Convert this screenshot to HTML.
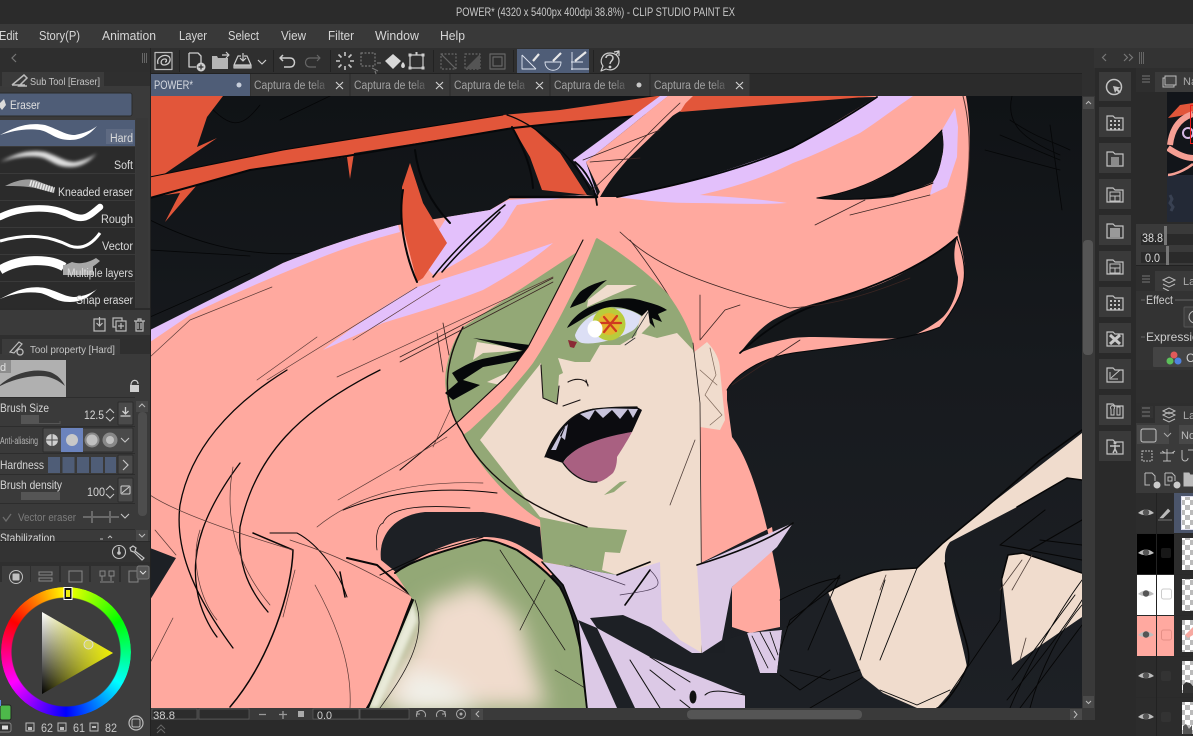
<!DOCTYPE html>
<html><head><meta charset="utf-8"><title>CLIP STUDIO PAINT</title>
<style>
html,body{margin:0;padding:0;background:#2b2b2b;width:1193px;height:736px;overflow:hidden}
svg{position:absolute;left:0;top:0;display:block;font-size:12px}
text{font-family:"Liberation Sans",sans-serif}
#ring{position:absolute;left:1px;top:587px;width:130px;height:130px;border-radius:50%;background:conic-gradient(#ff0,#0f0 60deg,#0ff 120deg,#00f 180deg,#f0f 240deg,#f00 300deg,#ff0);-webkit-mask:radial-gradient(circle,transparent 54px,#000 55px);mask:radial-gradient(circle,transparent 54px,#000 55px)}
#tri{position:absolute;left:42px;top:612px;width:71px;height:82px;clip-path:polygon(0 0,100% 50%,0 100%);background:linear-gradient(to left,#efef00,rgba(239,239,0,0)),linear-gradient(to bottom,#fff,#000)}
</style></head><body>
<svg width="1193" height="736" viewBox="0 0 1193 736" xmlns="http://www.w3.org/2000/svg">
<defs>
<clipPath id="cv"><rect x="151" y="96" width="931" height="612"/></clipPath>
<clipPath id="sh"><path d="M395 573L427 557L483 540L517 550L560 587L580 647L587 708L368 708L413 600Z"/></clipPath>
<clipPath id="ln"><rect x="0" y="120" width="135" height="190"/></clipPath>
<clipPath id="rp"><rect x="1136" y="40" width="57" height="696"/></clipPath>
<clipPath id="nv"><rect x="1167" y="92" width="26" height="130"/></clipPath>
<linearGradient id="bg" x1="0" y1="0" x2="0" y2="1"><stop offset="0" stop-color="#101316"/><stop offset="0.45" stop-color="#171a1e"/><stop offset="1" stop-color="#1d2025"/></linearGradient>
<linearGradient id="fade"><stop offset="0" stop-color="#3a3a3a" stop-opacity="0"/><stop offset="1" stop-color="#3a3a3a" stop-opacity=".75"/></linearGradient>
<filter id="b1" x="-30%" y="-30%" width="160%" height="160%"><feGaussianBlur stdDeviation="11"/></filter>
<filter id="b2" x="-30%" y="-30%" width="160%" height="160%"><feGaussianBlur stdDeviation="2"/></filter>
<filter id="b3" x="-30%" y="-30%" width="160%" height="160%"><feGaussianBlur stdDeviation="1.5"/></filter>
<pattern id="ck" width="10" height="10" patternUnits="userSpaceOnUse"><rect width="10" height="10" fill="#fff"/><rect width="5" height="5" fill="#bbb"/><rect x="5" y="5" width="5" height="5" fill="#bbb"/></pattern>
<g id="fd" fill="none" stroke="#c2c2c2" stroke-width="1.2"><path d="M-8 -7h6l2 2h8v12h-16z"/></g>
<g id="eye"><path d="M-8 0Q0 -7 8 0Q0 4.500 -8 0Z" fill="#bdbdbd"/><circle cx="0" cy="-0.500" r="3.200" fill="#555"/></g>
</defs>

<!-- chrome base -->
<rect width="1193" height="24" fill="#2b2b2b"/>
<rect y="24" width="1193" height="24" fill="#393939"/>
<rect y="48" width="1193" height="26" fill="#2f2f2f"/>
<rect y="74" width="1193" height="22" fill="#2b2b2b"/>
<rect x="150" y="73" width="943" height="1" fill="#222"/>
<text x="456" y="16" font-size="12" textLength="279" lengthAdjust="spacingAndGlyphs" fill="#c8c8c8">POWER* (4320 x 5400px 400dpi 38.8%) - CLIP STUDIO PAINT EX</text>
<g font-size="12.5" fill="#d6d6d6">
<text x="-1" y="40" textLength="19" lengthAdjust="spacingAndGlyphs">Edit</text>
<text x="39" y="40" textLength="41" lengthAdjust="spacingAndGlyphs">Story(P)</text>
<text x="102" y="40" textLength="54" lengthAdjust="spacingAndGlyphs">Animation</text>
<text x="179" y="40" textLength="28" lengthAdjust="spacingAndGlyphs">Layer</text>
<text x="228" y="40" textLength="31" lengthAdjust="spacingAndGlyphs">Select</text>
<text x="281" y="40" textLength="25" lengthAdjust="spacingAndGlyphs">View</text>
<text x="328" y="40" textLength="26" lengthAdjust="spacingAndGlyphs">Filter</text>
<text x="375" y="40" textLength="44" lengthAdjust="spacingAndGlyphs">Window</text>
<text x="440" y="40" textLength="25" lengthAdjust="spacingAndGlyphs">Help</text>
</g>

<!-- artwork -->
<rect x="151" y="96" width="931" height="612" fill="url(#bg)"/>
<g clip-path="url(#cv)" stroke-linejoin="round" stroke-linecap="round">
<!-- faint dark sketches -->
<g fill="none" stroke="#050607" stroke-width="0.8">
<path d="M150 220C190 240 240 258 310 253"/><path d="M150 250L250 256"/><path d="M150 317L250 273"/>
<path d="M1010 120C1040 140 1050 140 1070 150M1000 135L1060 160M985 150L1060 170M1012 96C1005 125 1025 140 1060 155M1050 125L1062 210"/>
<path d="M200 96C230 130 240 130 260 105M280 120L330 96"/>
<path d="M780 325C830 315 890 300 950 265"/>
</g>
<!-- hat -->
<g fill="#e2563a">
<path d="M150 96L223 96L207 117L197 147L217 138L160 177L150 180Z"/>
<path d="M150 177L283 150L503 115L560 110L657 96L877 96L680 112L560 123L513 128L354 153L350 179L347 157L250 170L197 185L165 222L180 193L150 197Z"/>
<path d="M507 115L533 128L560 153L587 195L542 190L530 157L513 128Z"/>
</g>
<g fill="none" stroke="#06080a" stroke-width="2"><path d="M150 198L197 185L250 170L347 156L513 128L560 123L680 112L877 96"/><path d="M512 127C525 150 532 170 533 188"/></g>
<path d="M150 177L283 150L503 115" fill="none" stroke="#06080a" stroke-width="1"/>
<path d="M507 115C530 122 570 150 590 190" fill="none" stroke="#06080a" stroke-width="1.200"/>
<!-- left hair -->
<path d="M150 333L283 263Q340 240 398 225L447 217L490 210L510 198L587 195L600 197L600 540L368 708L150 708Z" fill="#ffa99f"/>
<path d="M150 330L283 263Q340 240 398 225L400 232Q350 245 310 262Q240 290 190 315L150 342Z" fill="#e3c0fb"/>
<path d="M447 217L490 210L508 200L583 195L517 205C510 215 507 222 503 227C495 235 490 242 483 247C465 258 450 268 433 275L420 260Z" fill="#e3c0fb"/>
<path d="M323 350C355 325 385 305 417 287C465 272 510 258 553 243C530 262 510 275 483 290C450 303 415 313 383 323Z" fill="#e3c0fb"/>
<path d="M433 277C450 255 480 225 505 205M442 272C460 250 485 228 500 212" fill="none" stroke="#0a0a0a" stroke-width="1.500"/>
<!-- horn on top of hair -->
<path d="M410 163L402 187L402 223L417 282L423 278L447 243L423 203Z" fill="#e2563a"/>
<path d="M403 190C398 220 405 255 417 282" fill="none" stroke="#06080a" stroke-width="2"/>
<path d="M415 150C418 175 428 200 450 223" fill="none" stroke="#06080a" stroke-width="2"/>
<path d="M150 548L176 558L150 600Z" fill="#1d2025"/>
<!-- right hair -->
<path d="M597 197C630 140 640 120 693 96L966 96C972 130 972 170 958 233C968 270 970 290 940 327C910 340 850 345 793 353C760 358 735 375 727 390L727 400L732 437C750 460 765 510 780 590L780 627L750 633L732 627L732 587L775 547L772 527L697 565L700 430L693 343L597 238Z" fill="#ffa99f"/>
<path d="M600 197C610 180 618 170 627 160C645 140 660 123 677 113L700 100L877 97C870 102 865 104 860 107C835 122 815 135 793 147C765 160 740 170 710 177C680 185 650 190 617 197Z" fill="#111417"/>
<path d="M690 96L877 96L680 112Z" fill="#e2563a"/>
<path d="M617 197C660 190 690 183 710 175C745 165 770 155 793 147C820 133 845 117 877 96L913 96C895 108 880 120 860 133C835 145 815 155 793 163C765 177 735 187 700 195C730 197 760 199 787 203C755 205 725 203 693 203C665 203 640 200 617 197Z" fill="#e3c0fb"/>
<path d="M573 160L660 96L668 96L586 162L597 195Z" fill="#e3c0fb"/>
<path d="M668 96L693 96L627 160L600 192L586 162Z" fill="#ffa99f"/>
<path d="M817 198C840 195 860 188 877 180C900 168 925 150 942 130C944 140 944 150 942 157C940 168 937 176 933 182C915 190 905 193 893 197C870 200 845 201 817 198Z" fill="#111417"/>
<path d="M955 108L958 127L957 157L947 187L930 195L933 182C937 176 940 168 942 157C944 150 944 140 942 130Z" fill="#e3c0fb"/>
<path d="M957 238C952 255 955 265 958 277C958 295 950 310 943 317C930 328 915 335 907 338C860 340 820 335 793 338C770 342 750 348 740 353C750 340 760 328 773 320C795 308 815 303 840 297C860 292 880 285 893 278C915 268 940 250 957 238Z" fill="#14171a"/>
<g fill="none" stroke="#06080a"><path d="M617 197C680 185 740 170 793 147C825 130 850 115 877 97" stroke-width="1.800"/><path d="M510 197L597 197" stroke-width="2.500"/><path d="M957 237C930 262 880 285 840 297C800 308 770 325 740 353" stroke-width="1.800"/><path d="M575 162C585 170 595 185 597 205" stroke-width="1.800"/><path d="M817 198C870 190 910 165 942 130" stroke-width="1"/><path d="M817 198C850 202 900 197 933 183" stroke-width="1"/><path d="M963 96C972 130 972 175 958 233" stroke-width="1" stroke="#55322e"/><path d="M957 238C968 270 970 290 940 327C910 340 850 345 793 353C760 358 735 375 727 390" stroke-width="1"/></g>
<g fill="none" stroke="#3a2522" stroke-width="0.8"><path d="M592 190C620 165 640 140 680 103"/><path d="M583 160L660 130M590 162L640 158"/><path d="M815 225L865 200M850 215L930 195"/><path d="M620 232C655 265 690 280 790 308C840 305 880 290 910 278"/><path d="M630 240C660 280 680 310 692 345"/><path d="M700 295L700 340M700 340L725 310L740 305"/><path d="M732 385L800 340"/></g>
<!-- face -->
<path d="M597 238C625 255 650 275 667 293C680 310 690 330 693 343L700 403L702 653L660 640L658 562L617 575L543 562L540 520C515 505 480 470 460 430C448 410 442 385 447 365C450 350 455 338 463 327L580 250Z" fill="#93a876"/>
<path d="M677 333L693 350L700 403L702 653L660 640L660 565L617 575L602 570L605 552L620 553L627 530L587 527L540 517L480 440L533 373L541 363L543 398L557 403L559 375L563 373L558 358L575 362L590 362L600 345L620 345L640 333L657 338Z" fill="#f0dccd"/>
<path d="M693 353L707 342C715 350 720 360 720 370L725 420L720 430L700 427Z" fill="#f0dccd"/>
<path d="M477 342L527 350L483 353L473 360ZM487 382L513 370L500 385ZM588 300L607 285L637 285L613 295L587 307Z" fill="#f0dccd"/>
<!-- eye -->
<path d="M567 328C572 318 582 310 592 306C605 300 625 296 640 300C650 303 660 305 667 310L658 314L662 322L652 318L655 328L645 318C635 310 620 306 610 307C595 309 582 320 567 328Z" fill="#06080a"/>
<path d="M607 280C595 283 586 287 580 292C576 297 572 303 570 308L585 302C590 295 598 287 607 280Z" fill="#06080a"/>
<path d="M575 335C580 322 592 312 612 309C625 307 635 312 641 316C640 324 635 330 630 332C615 340 595 345 582 343C578 342 575 338 575 335Z" fill="#dcdff5"/>
<circle cx="609" cy="324" r="16.500" fill="#b9cc3c"/><circle cx="609" cy="324" r="11" fill="#e4b52c"/>
<path d="M604 317L616 331M617 316L604 332M599 323H621" stroke="#cf3a20" stroke-width="2.200"/>
<ellipse cx="595" cy="329" rx="7.500" ry="8.500" fill="#fff"/>
<path d="M568 340L577 342L574 348L570 347Z" fill="#8a2a35"/>
<path d="M640 318L648 310L650 325L635 340" fill="#f0dccd"/>
<path d="M635 338L625 345M648 312L632 338" fill="none" stroke="#333" stroke-width=".8"/>
<!-- wink -->
<path d="M473 338L530 345L527 352Z" fill="#06080a"/>
<path d="M452 373C465 365 475 360 487 358L527 350L520 360L483 367L463 380L480 385L453 400L445 393L458 382Z" fill="#06080a"/>
<!-- nose+mouth -->
<g fill="none" stroke="#1a1414" stroke-width="1.100"><path d="M568 382C575 378 585 378 588 385M586 380L588 386"/><path d="M563 406L580 400"/><path d="M541 365L543 398L557 404L559 386"/></g>
<path d="M545 457C550 440 560 428 570 420C578 412 590 408 600 408L637 407L642 410L632 432C610 437 595 440 583 447C572 452 565 458 563 463Z" fill="#0c0c10"/>
<path d="M563 463C570 452 580 447 590 443C605 437 620 434 632 432C625 445 620 452 617 457C617 465 615 470 613 473C605 480 600 482 597 482C585 482 570 475 563 463Z" fill="#a96081"/>
<path d="M580 414L589 420L595 410L603 418L612 410L620 419L628 409L633 418L638 409L600 408ZM551 450L556 450L566 425L561 432ZM560 436L564 428L568 424L565 440Z" fill="#c8c4dc"/>
<path d="M545 457C552 438 565 420 580 413C590 408 615 407 637 407M563 463C575 480 590 483 597 482" fill="none" stroke="#111" stroke-width="1.200"/>
<path d="M604 495L620 482L627 481L614 492Z" fill="#93a876"/>
<!-- strand -->
<path d="M583 238L597 236C580 280 555 330 533 363C520 380 510 390 500 402L470 430L400 480L400 470L460 420L505 378L528 347C545 315 565 275 583 238Z" fill="#ffa99f"/>
<path d="M583 240C565 275 545 315 528 347L505 378L460 420L400 470" fill="none" stroke="#140d0c" stroke-width="1.100"/>
<path d="M463 327C445 360 440 400 462 432C480 470 520 505 587 527" fill="none" stroke="#140d0c" stroke-width="1.400"/>
<path d="M693 343L700 403L702 653" fill="none" stroke="#2a2220" stroke-width="0.800"/>
<path d="M710 348L716 375L705 395L722 415L710 425M700 370L717 385" fill="none" stroke="#806a5c" stroke-width="0.700"/>
<path d="M400 357L553 278M400 362L553 282M437 333L443 372M443 323L449 355" fill="none" stroke="#3a2522" stroke-width="0.800"/>
<!-- hair lines -->
<g fill="none" stroke="#0a0707" stroke-width="1.300">
<path d="M287 370C230 405 190 450 180 505C175 545 190 590 233 648"/>
<path d="M240 463C205 510 190 550 197 590C200 610 210 628 217 637"/>
<path d="M380 370C300 410 255 455 240 527C238 560 245 585 268 612"/>
<path d="M253 533L293 550C292 590 270 660 230 707" stroke-width="1.500"/>
<path d="M347 558L377 565L413 597C395 640 385 680 367 708" stroke-width="2"/>
<path d="M270 533L297 533C320 545 340 575 347 597" stroke-width="1"/>
<path d="M343 510C380 495 430 485 497 493" stroke-width="1"/>
<path d="M383 523C390 505 430 505 470 508" stroke-width="0.800"/>
<path d="M377 550C375 535 378 525 383 523" stroke-width="0.700"/>
<path d="M340 572L345 597" stroke-width="1.500"/>
</g>
<g fill="none" stroke="#5a3a36" stroke-width="0.700">
<path d="M150 357L190 320L272 287M257 380L317 337M267 380L417 287M337 377L553 277M353 340L440 285M338 500L447 437M317 527C350 500 400 480 483 483M450 410L433 447"/>
<path d="M233 467C225 510 232 560 270 605M173 618L150 663M315 585C340 630 352 670 350 708M200 530C190 560 200 600 217 620M150 495C165 505 200 522 293 550M155 530L176 555M283 617L295 570"/>
<path d="M290 540C320 550 350 560 413 597"/>
</g>
<!-- neck dark / shoulder -->
<path d="M381 560C378 535 395 515 425 512L483 512C510 515 530 525 540 527L543 560C520 545 510 537 483 537C450 540 420 555 397 573Z" fill="#1d2025"/>
<path d="M395 573C405 565 415 562 427 557C445 550 465 545 483 540C495 540 505 545 517 550C535 562 550 575 560 587C570 605 575 625 580 647L587 708L368 708L413 600Z" fill="#93a876"/>
<g clip-path="url(#sh)"><path d="M427 603L477 583L517 617L547 707L368 708L413 640Z" fill="#f0dccd" filter="url(#b1)"/><path d="M395 708L410 670L450 680L480 708Z" fill="#f1f1ea" filter="url(#b1)"/><path d="M368 708L413 600L418 620L378 708Z" fill="#e9ead9" filter="url(#b2)"/></g>
<path d="M395 573C405 565 415 562 427 557C445 550 465 545 483 540C495 540 505 545 517 550C535 562 550 575 560 587C570 605 575 625 580 647L587 708M413 600L368 708" fill="none" stroke="#0a0a0a" stroke-width="2"/>
<path d="M380 575L430 552L483 537" fill="none" stroke="#0a0a0a" stroke-width="1"/>
<path d="M415 600C430 640 400 680 380 708M500 550L565 650M545 580L520 630M555 670L585 688" fill="none" stroke="#1a1414" stroke-width="0.700"/>
<!-- collar -->
<path d="M542 562L617 575L660 562L662 620L680 640L702 653L725 653L760 673L777 673L772 708L587 708L578 623L563 585Z" fill="#dcc9e6"/>
<path d="M697 565L793 523L777 547L732 587L722 640L702 653Z" fill="#dcc9e6"/>
<path d="M747 633L782 630L777 673L760 673Z" fill="#dcc9e6"/>
<path d="M578 620L597 628L635 708L617 708Z" fill="#1d2025"/>
<path d="M590 618L623 615L650 627L692 653L725 653L725 640L747 633L760 673L777 673L782 630L787 627L828 592L863 677L903 708L745 708L745 695L713 682L650 657L597 628Z" fill="#1d2025"/>
<path d="M697 565C730 555 770 540 793 523M542 562L563 585L578 623L587 708M617 575L650 562M650 570L625 605" fill="none" stroke="#0a0a0a" stroke-width="1.600"/>
<path d="M752 636L768 668M760 632L775 660M770 632L778 655" fill="none" stroke="#0a0a0a" stroke-width="0.800"/>
<ellipse cx="693" cy="697" rx="3.500" ry="6.500" fill="#111"/>
<path d="M650 657L690 682M650 670L675 690M630 660L660 708M680 700L690 708" fill="none" stroke="#111" stroke-width="1"/>
<path d="M705 695C712 688 728 692 745 695" fill="none" stroke="#111" stroke-width="1"/>
<path d="M620 595C650 590 670 590 650 570M570 565L625 585" fill="none" stroke="#4a3a55" stroke-width="0.700"/>
<!-- right skin -->
<path d="M1082 433L1082 480L1067 478L1017 507L950 542C944 550 945 556 945 563C952 610 962 640 967 667C962 680 950 693 937 708L917 708L883 693L863 677L828 592C845 582 865 574 883 570L917 568L943 543L983 510Z" fill="#f0dccd"/>
<path d="M1082 573L1023 553L1008 555L1002 578L1012 665L1082 617Z" fill="#f0dccd"/>
<path d="M1082 430L1040 460L983 510L943 543L917 568L883 570C865 574 845 582 828 592M1082 573L1023 553L1008 555L1002 578M945 563C955 620 975 650 967 667C955 695 940 708 937 708M1017 507L1067 478L1082 480" fill="none" stroke="#060606" stroke-width="1.500"/>
<g fill="none" stroke="#060606" stroke-width=".9">
<path d="M828 592L790 620L780 650M787 627L840 575L808 650M780 600C800 590 820 580 840 578M780 675L800 690L830 670M863 677L810 708M880 690L917 705L950 690M1082 580C1060 610 1030 660 1010 708M1082 605C1060 630 1040 670 1030 708M1082 625L1020 708M1075 595L1012 680"/>
<path d="M950 693L1000 620L1002 578M1007 700C1040 660 1070 620 1082 600M885 580L860 660M917 568L880 660M790 670L830 680L860 670"/>
<path d="M1045 510L1000 545L1082 560M1030 550L1082 520M1040 540L1082 545" stroke-width="1.100"/>
</g>
<path d="M886 575L880 590M1022 560L1000 590M1032 555L1012 590M1026 638L1020 660M695 440L670 505" fill="none" stroke="#51403a" stroke-width="0.800"/>
</g>

<!-- tabs -->
<rect x="151" y="74" width="99" height="22" fill="#4f5d77"/>
<g fill="#3a3a3a"><rect x="250.500" y="74" width="99" height="22"/><rect x="350.500" y="74" width="99" height="22"/><rect x="450.500" y="74" width="99" height="22"/><rect x="550.500" y="74" width="99" height="22"/><rect x="650.500" y="74" width="99" height="22"/></g>
<text x="154" y="89" fill="#d5d9e0" font-size="11.500" textLength="39" lengthAdjust="spacingAndGlyphs">POWER*</text>
<circle cx="239" cy="85" r="2.500" fill="#c8cfdb"/>
<g fill="#a2a2a2" font-size="11.500">
<text x="254" y="89" textLength="71" lengthAdjust="spacingAndGlyphs">Captura de tela</text>
<text x="354" y="89" textLength="71" lengthAdjust="spacingAndGlyphs">Captura de tela</text>
<text x="454" y="89" textLength="71" lengthAdjust="spacingAndGlyphs">Captura de tela</text>
<text x="554" y="89" textLength="71" lengthAdjust="spacingAndGlyphs">Captura de tela</text>
<text x="654" y="89" textLength="71" lengthAdjust="spacingAndGlyphs">Captura de tela</text>
</g>
<g fill="url(#fade)"><rect x="310" y="76" width="16" height="18"/><rect x="410" y="76" width="16" height="18"/><rect x="510" y="76" width="16" height="18"/><rect x="610" y="76" width="16" height="18"/><rect x="710" y="76" width="16" height="18"/></g>
<g stroke="#cfcfcf" stroke-width="1.200"><path d="M336 82l7 7M343 82l-7 7M436 82l7 7M443 82l-7 7M536 82l7 7M543 82l-7 7M736 82l7 7M743 82l-7 7"/></g>
<circle cx="639" cy="85" r="2.500" fill="#c8c8c8"/>
<path d="M1084 81l3.500 3.500 3.500 -3.500" fill="none" stroke="#cfcfcf" stroke-width="1.200"/>

<!-- toolbar -->
<rect x="517" y="49" width="72" height="24" fill="#4f5d77"/>
<g stroke="#222" stroke-width="1"><path d="M179.500 50V72M273.500 50V72M330.500 50V72M433.500 50V72M513.500 50V72M593.500 50V72"/></g>
<g fill="none" stroke="#cdcdcd" stroke-width="1.200" stroke-linejoin="round">
<rect x="155" y="52.500" width="17" height="17" stroke="#bbb"/><path d="M158 64C156 58 163 54 168 56C172 58 170 65 164 65C160 65 160 59 165 59C167 59 167 62 165 62" stroke-width="1.300"/>
<path d="M189 53h9l3 3v7M189 53v14h7" stroke-width="1.300"/><circle cx="201" cy="67" r="4.500" fill="#cfcfcf" stroke="none"/><path d="M198.500 67h5M201 64.500v5" stroke="#2f2f2f"/>
<path d="M212 56h5l1 2h10v11h-16z" fill="#b5b5b5" stroke="none"/><path d="M222 55h7M226 52l3 3-3 3"/>
<path d="M234 65L238 56h3M251 65L247 56h-3M234 65h17v3h-17z"/><path d="M243 53v8M240 58l3 3 3-3"/><rect x="234" y="65.500" width="17" height="3" fill="#b5b5b5" stroke="none"/>
<path d="M258 60l4 4 4-4"/>
<path d="M283 55l-3 3 3 3M280 58h10c6 0 6 9 0 9h-6" stroke-width="1.500"/>
<g opacity=".35"><path d="M317 55l3 3-3 3M320 58h-10c-6 0-6 9 0 9h6"/></g>
<g stroke-width="1.600" opacity=".95"><path d="M345 52v4M345 66v4M336 61h4M350 61h4M338.500 54.500l3 3M348.500 64.500l3 3M351.500 54.500l-3 3M341.500 64.500l-3 3"/></g>
<g opacity=".45"><rect x="361" y="53" width="14" height="13" stroke-dasharray="2 1.500"/><path d="M372 68l6 3M377 63h4M375 71l1 3"/></g>
<path d="M393 54l8 7-8 8-8-8z" fill="#d8d8d8" stroke="none"/><path d="M403 62c3 3 2 6 0 6s-3-3 0-6z" fill="#d8d8d8" stroke="none"/>
<rect x="410" y="55" width="13" height="13"/><g fill="#cdcdcd" stroke="none"><rect x="408.500" y="53.500" width="3" height="3"/><rect x="421.500" y="53.500" width="3" height="3"/><rect x="408.500" y="66.500" width="3" height="3"/><rect x="421.500" y="66.500" width="3" height="3"/><rect x="415.500" y="52" width="2" height="3"/></g>
<g opacity=".35"><rect x="441" y="54" width="15" height="15" stroke-dasharray="2 1.500"/><path d="M441 54l15 15"/><rect x="465" y="54" width="15" height="15" stroke-dasharray="2 1.500"/><path d="M480 54v15h-15z" fill="#999" stroke="none"/><rect x="490" y="54" width="15" height="15"/><rect x="493" y="57" width="9" height="9"/></g>
<g stroke="#dfe5f0"><path d="M522 55v14h14M522 55l14 14" stroke-width="0.900"/><path d="M533 61l6-7" stroke-width="2.200" stroke="#e8e8e8"/>
<path d="M545 62h16c0 11-16 11-16 0z" stroke-width="0.900"/><path d="M553 61l8-8" stroke-width="2.200" stroke="#e8e8e8"/>
<path d="M572 52v18M571 69h18M571 62h12" stroke-width="0.900"/><path d="M575 61l11-9" stroke-width="2.200" stroke="#e8e8e8"/></g>
<path d="M603 66l-2 5 5-2c8 3 13-3 13-8 0-5-4-8-9-8-8 0-11 8-7 13z"/><path d="M606 58c0-4 7-4 7 0 0 3-3 3-3 6" stroke-width="1.500"/><circle cx="610" cy="67" r="0.800" fill="#cdcdcd"/><path d="M614 52l5-1 0 5M619 51l-3 4"/>
</g>

<!-- left column -->
<rect x="0" y="48" width="150" height="688" fill="#3a3a3a"/>
<rect x="0" y="48" width="150" height="24" fill="#2e2e2e"/>
<path d="M16 54l-4 4 4 4" fill="none" stroke="#777" stroke-width="1.200"/>
<path d="M142.500 53v10M144.500 53v10M146.500 53v10" stroke="#666" stroke-width="1"/>
<rect x="150" y="48" width="1" height="688" fill="#222"/>
<rect y="72" width="150" height="14" fill="#2f2f2f"/>
<rect x="2" y="72" width="102" height="15" fill="#3b3b3b"/>
<path d="M12 85L24 75l3 3-8 8h8M12 85h13" fill="none" stroke="#bcbcbc" stroke-width="1.500"/>
<text x="30" y="85" font-size="10" fill="#c5c5c5" textLength="70" lengthAdjust="spacingAndGlyphs">Sub Tool [Eraser]</text>
<rect x="-3" y="93" width="135" height="23" rx="2" fill="#4f5d77" stroke="#2a2a2a"/>
<path d="M-2 105l6-6 2 6-4 5z" fill="#dcdcdc"/>
<text x="10" y="109" font-size="12" fill="#e0e0e0" textLength="30" lengthAdjust="spacingAndGlyphs">Eraser</text>
<rect x="136" y="118" width="12" height="190" fill="#383838"/>
<g fill="#2b2b2b">
<rect x="0" y="147" width="135" height="26"/><rect x="0" y="174" width="135" height="26"/><rect x="0" y="201" width="135" height="26"/><rect x="0" y="228" width="135" height="26"/><rect x="0" y="255" width="135" height="26"/><rect x="0" y="282" width="135" height="26"/>
</g>
<rect x="0" y="120" width="135" height="26" fill="#4f5d77"/>
<g clip-path="url(#ln)">
<path d="M0 135C15 127 28 122 45 125C60 130 65 135 75 135C85 133 92 130 97 126C90 134 82 140 70 140C55 140 50 132 40 130C25 128 12 131 0 135Z" fill="#fff"/>
<path d="M0 162C15 154 28 149 45 152C60 157 65 162 75 162C85 160 92 157 97 153C90 161 82 167 70 167C55 167 50 159 40 157C25 155 12 158 0 162Z" fill="#e0e0e0" filter="url(#b3)"/>
<path d="M5 186C15 181 25 178 35 180L55 188L54 193L35 188C25 186 15 186 5 186Z" fill="#9a9a9a"/>
<path d="M30 183L54 190" stroke="#e8e8e8" stroke-width="6" stroke-dasharray="1.500 1.200" fill="none"/>
<path d="M0 217C20 207 50 205 70 215C85 222 90 215 100 207" fill="none" stroke="#fff" stroke-width="6.500" stroke-linecap="round"/>
<path d="M0 241C30 233 50 236 70 246C85 251 95 240 100 233" fill="none" stroke="#fff" stroke-width="3"/>
<path d="M0 270C20 258 50 258 64 267" fill="none" stroke="#fff" stroke-width="9"/>
<path d="M63 266L70 270C80 276 92 268 100 261L96 258C90 262 80 265 72 262Z" fill="#a8a8a8"/>
<rect x="63" y="265" width="30" height="10" fill="#a8a8a8"/>
<path d="M0 299C15 291 28 285 45 288C60 292 65 297 75 297C85 296 92 293 97 289C90 296 82 302 70 302C55 302 50 295 40 293C25 291 12 294 0 299Z" fill="#fff"/>
</g>
<rect x="106" y="129" width="27" height="15" fill="#5e6a82"/>
<g font-size="11.500" fill="#dadada">
<text x="110" y="142" textLength="23" lengthAdjust="spacingAndGlyphs">Hard</text>
<text x="114" y="169" textLength="19" lengthAdjust="spacingAndGlyphs">Soft</text>
<text x="58" y="196" textLength="75" lengthAdjust="spacingAndGlyphs">Kneaded eraser</text>
<text x="101" y="223" textLength="32" lengthAdjust="spacingAndGlyphs">Rough</text>
<text x="102" y="250" textLength="31" lengthAdjust="spacingAndGlyphs">Vector</text>
<text x="67" y="277" textLength="66" lengthAdjust="spacingAndGlyphs">Multiple layers</text>
<text x="76" y="304" textLength="57" lengthAdjust="spacingAndGlyphs">Snap eraser</text>
</g>
<rect y="308" width="150" height="2" fill="#2a2a2a"/>
<g fill="none" stroke="#bcbcbc" stroke-width="1.200">
<rect x="94" y="319" width="11" height="12"/><path d="M99.500 317v8M96.500 323l3 3 3-3"/>
<rect x="113" y="318" width="9" height="9"/><rect x="116" y="321" width="10" height="10" fill="#3a3a3a"/><path d="M121 323v6M118 326h6"/>
<path d="M134 321h11M136 321v10h7v-10M138 321v-2h3v2M138 323v6M141 323v6"/>
</g>
<rect y="335" width="150" height="19" fill="#2f2f2f"/>
<rect x="2" y="339" width="118" height="16" fill="#3b3b3b"/>
<path d="M10 352l9-10 3 2-8 9zM20 349a3 3 0 1 0 .1 0" fill="none" stroke="#bcbcbc" stroke-width="1.200"/>
<text x="30" y="353" font-size="10" fill="#c5c5c5" textLength="85" lengthAdjust="spacingAndGlyphs">Tool property [Hard]</text>
<rect x="0" y="360" width="66" height="37" fill="#b0b0b0"/>
<path d="M0 385C15 372 35 368 50 372C58 375 62 380 65 386C58 380 50 376 40 376C25 376 10 381 0 386Z" fill="#3a3a3a"/>
<rect x="0" y="360" width="11" height="13" fill="#8d8d8d"/><text x="0" y="371" font-size="11" fill="#e0e0e0">d</text>
<rect x="130" y="385" width="9" height="7" fill="#cfcfcf"/><path d="M131 385c0-6 7-6 7-1" fill="none" stroke="#cfcfcf" stroke-width="1.200"/>
<!-- property rows -->
<g stroke="#2d2d2d"><path d="M0 397.500H135M0 426.500H135M0 453.500H135M0 474.500H135M0 503.500H135M0 529.500H135"/></g>
<text x="0" y="412" font-size="12" fill="#d5d5d5" textLength="49" lengthAdjust="spacingAndGlyphs">Brush Size</text>
<rect x="21" y="415" width="18" height="8" fill="#555"/><path d="M21 423.500H60V421" fill="none" stroke="#555"/>
<text x="84" y="419" font-size="12" fill="#d5d5d5" textLength="20" lengthAdjust="spacingAndGlyphs">12.5</text>
<path d="M106 413l4-4 4 4M106 417l4 4 4-4" fill="none" stroke="#c5c5c5"/>
<rect x="118" y="402" width="15" height="23" rx="1" fill="#4a4a4a" stroke="#2c2c2c"/>
<path d="M125.500 407v7M122.500 411l3 3 3-3M120.500 416h10" fill="none" stroke="#d0d0d0" stroke-width="1.300"/>
<text x="0" y="444" font-size="10" fill="#b5b5b5" textLength="38" lengthAdjust="spacingAndGlyphs">Anti-aliasing</text>
<rect x="43" y="428" width="90" height="24" rx="1" fill="#4a4a4a" stroke="#2c2c2c"/>
<rect x="61" y="428" width="22" height="24" fill="#6b83bd"/>
<circle cx="52" cy="440" r="6" fill="#d0d0d0"/><path d="M52 433v14M45 440h14" stroke="#4a4a4a" stroke-width="1"/>
<circle cx="72" cy="440" r="6" fill="#c8c8c8"/>
<circle cx="92" cy="440" r="7.500" fill="#888"/><circle cx="92" cy="440" r="5.500" fill="#c0c0c0"/>
<circle cx="110" cy="440" r="7.500" fill="#888"/><circle cx="110" cy="440" r="4" fill="#c0c0c0"/>
<path d="M121 438l4 4 4-4" fill="none" stroke="#c5c5c5" stroke-width="1.100"/>
<text x="0" y="469" font-size="12" fill="#d5d5d5" textLength="44" lengthAdjust="spacingAndGlyphs">Hardness</text>
<g fill="#4f5d77"><rect x="48" y="457" width="12" height="16"/><rect x="62.500" y="457" width="12" height="16"/><rect x="77" y="457" width="12" height="16"/><rect x="91" y="457" width="12" height="16"/><rect x="105" y="457" width="11" height="16"/></g>
<rect x="118" y="455" width="15" height="19" rx="1" fill="#4a4a4a" stroke="#2c2c2c"/><path d="M123 460l5 5-5 5" fill="none" stroke="#c5c5c5" stroke-width="1.200"/>
<text x="0" y="489" font-size="12" fill="#d5d5d5" textLength="62" lengthAdjust="spacingAndGlyphs">Brush density</text>
<rect x="21" y="492" width="39" height="8" fill="#555"/>
<text x="87" y="496" font-size="12" fill="#d5d5d5" textLength="18" lengthAdjust="spacingAndGlyphs">100</text>
<path d="M106 490l4-4 4 4M106 494l4 4 4-4" fill="none" stroke="#c5c5c5"/>
<rect x="118" y="478" width="15" height="24" rx="1" fill="#4a4a4a" stroke="#2c2c2c"/><rect x="121" y="486" width="9" height="8" rx="1" fill="none" stroke="#d0d0d0"/><path d="M122 493l7-6" stroke="#d0d0d0"/>
<path d="M3 517l3 4 5-7" fill="none" stroke="#6d6d6d" stroke-width="1.300"/>
<text x="18" y="521" font-size="11" fill="#7c7c7c" textLength="58" lengthAdjust="spacingAndGlyphs">Vector eraser</text>
<path d="M83 517h18M92 511v12M101 517h18M110 511v12" stroke="#6a6a6a" stroke-width="2"/>
<path d="M121 514l4 4 4-4" fill="none" stroke="#c5c5c5" stroke-width="1.100"/>
<rect x="136" y="401" width="12" height="11" fill="#484848"/><path d="M139 407l3-3 3 3" fill="none" stroke="#bbb"/>
<rect x="138" y="412" width="9" height="104" rx="4" fill="#4d4d4d"/>
<rect x="136" y="530" width="12" height="12" fill="#484848"/><path d="M139 534l3 3 3-3" fill="none" stroke="#bbb"/>
<text x="0" y="542" font-size="12" fill="#d5d5d5" textLength="55" lengthAdjust="spacingAndGlyphs">Stabilization</text>
<path d="M100 539h3M108 538l2-2 2 2" fill="none" stroke="#bbb"/>
<rect y="541" width="150" height="1" fill="#2a2a2a"/>
<rect y="542" width="150" height="20" fill="#333"/>
<circle cx="119" cy="552" r="6.500" fill="none" stroke="#c5c5c5" stroke-width="1.100"/><path d="M119 547v5" stroke="#c5c5c5" stroke-width="1.500"/><circle cx="119" cy="553" r="1.800" fill="#c5c5c5"/>
<path d="M133 546l3 2-1 3 9 7-2 2-8-8-3-1-1-3z" fill="none" stroke="#c5c5c5" stroke-width="1.200"/>
<rect y="562" width="150" height="20" fill="#2f2f2f"/>
<rect x="2" y="566" width="28" height="17" fill="#3d3d3d"/><rect x="31" y="566" width="28" height="17" fill="#3d3d3d"/><rect x="61" y="566" width="28" height="17" fill="#3d3d3d"/><rect x="91" y="566" width="28" height="17" fill="#3d3d3d"/><rect x="121" y="566" width="29" height="17" fill="#3d3d3d"/>
<rect y="582" width="150" height="154" fill="#3d3d3d"/>
<circle cx="16" cy="577" r="6.500" fill="none" stroke="#c0c0c0"/><rect x="12.500" y="573.500" width="7" height="7" rx="1" fill="#c0c0c0"/>
<g fill="none" stroke="#888"><path d="M39 572h13v3h-13zM39 578h13v3h-13z"/><rect x="69" y="571" width="13" height="11"/><rect x="100" y="571" width="5" height="5"/><rect x="109" y="571" width="5" height="5"/><path d="M102 576v5M111 576v5M100 582h14"/><rect x="129" y="571" width="9" height="11"/></g>
<rect x="137" y="566" width="12" height="13" rx="2" fill="#555" stroke="#777"/><path d="M140 571l3 3 3-3" fill="none" stroke="#ddd"/>
<!-- hsl -->
<rect x="0" y="705" width="11" height="15" rx="2" fill="#4db84a" stroke="#222"/><rect x="0" y="700" width="1" height="6" fill="#5a8ae0"/>
<rect x="-2" y="723" width="13" height="9" rx="2" fill="#333" stroke="#888"/><rect x="2" y="725.500" width="6" height="4" fill="#ddd"/>
<g fill="none" stroke="#bbb"><rect x="26" y="723" width="8" height="8"/><rect x="58" y="723" width="8" height="8"/><rect x="90" y="723" width="8" height="8"/></g>
<g fill="#bbb"><rect x="28" y="727" width="4" height="3"/><rect x="60" y="727" width="4" height="3"/><rect x="92" y="726" width="4" height="2"/></g>
<g font-size="12" fill="#c5c5c5"><text x="41" y="732" textLength="12" lengthAdjust="spacingAndGlyphs">62</text><text x="73" y="732" textLength="12" lengthAdjust="spacingAndGlyphs">61</text><text x="105" y="732" textLength="12" lengthAdjust="spacingAndGlyphs">82</text></g>
<circle cx="136" cy="723" r="7" fill="none" stroke="#bbb" stroke-width="1.200"/><rect x="132" y="719" width="8" height="8" rx="1.500" fill="none" stroke="#bbb"/>

<!-- canvas bottom bar -->
<rect x="151" y="708" width="931" height="12" fill="#3a3a3a"/>
<rect x="151" y="720" width="945" height="16" fill="#2a2a2a"/>
<rect x="152" y="709" width="45" height="10" fill="#2c2c2c" stroke="#666" stroke-width=".6"/><rect x="199" y="709" width="50" height="10" fill="#2c2c2c" stroke="#666" stroke-width=".6"/>
<text x="153" y="719" font-size="11" fill="#d0d0d0" textLength="22" lengthAdjust="spacingAndGlyphs">38.8</text>
<path d="M259 714.500h7M279 714.500h8M283 711v8" stroke="#999" stroke-width="1.300"/><rect x="298" y="711" width="6" height="6" fill="#aaa"/>
<rect x="313" y="709" width="46" height="10" fill="#2c2c2c" stroke="#666" stroke-width=".6"/><rect x="360" y="709" width="49" height="10" fill="#2c2c2c" stroke="#666" stroke-width=".6"/>
<text x="317" y="719" font-size="11" fill="#d0d0d0" textLength="15" lengthAdjust="spacingAndGlyphs">0.0</text>
<g fill="none" stroke="#aaa"><path d="M417 717a4.500 4.500 0 1 1 8 0M417 711v3h3"/><path d="M437 717a4.500 4.500 0 1 1 8 0M445 711v3h-3"/><circle cx="461" cy="714" r="4.500"/></g><circle cx="461" cy="714" r="1.500" fill="#aaa"/><rect x="471" y="709" width="12" height="11" fill="#484848"/><path d="M479 711l-3 3 3 3" fill="none" stroke="#bbb"/>
<rect x="687" y="710" width="175" height="9" rx="4" fill="#555"/>
<rect x="1070" y="709" width="12" height="11" fill="#4a4a4a"/><path d="M1074 711l3 3.500-3 3.500" fill="none" stroke="#bbb"/>
<path d="M157 729l4-4 4 4M157 733l4-4 4 4" fill="none" stroke="#666"/>

<!-- canvas right scrollbar + right strip -->
<rect x="1082" y="96" width="13" height="624" fill="#393939"/>
<rect x="1083" y="97" width="11" height="12" fill="#4a4a4a"/><path d="M1086 104l2.500-2.500 2.500 2.500" fill="none" stroke="#bbb"/>
<rect x="1083" y="240" width="10" height="115" rx="4" fill="#555"/>
<rect x="1083" y="696" width="11" height="12" fill="#4a4a4a"/><path d="M1086 701l2.500 2.500 2.500-2.500" fill="none" stroke="#bbb"/>
<rect x="1095" y="48" width="98" height="688" fill="#2a2a2a"/>
<rect x="1082" y="48" width="13" height="48" fill="#2f2f2f"/>
<rect x="1094" y="48" width="99" height="20" fill="#333"/>
<path d="M1106 54l-3.500 3.500 3.500 3.500M1124 54l3.500 3.500-3.500 3.500M1129 54l3.500 3.500-3.500 3.500" fill="none" stroke="#777" stroke-width="1.200"/>
<path d="M1139.500 52v12M1141.500 52v12M1143.500 52v12" stroke="#666"/>
<g fill="#3a3a3a"><rect x="1099" y="72" width="32" height="29"/><rect x="1099" y="107" width="32" height="30"/><rect x="1099" y="143" width="32" height="30"/><rect x="1099" y="179" width="32" height="30"/><rect x="1099" y="215" width="32" height="30"/><rect x="1099" y="251" width="32" height="30"/><rect x="1099" y="287" width="32" height="30"/><rect x="1099" y="323" width="32" height="30"/><rect x="1099" y="359" width="32" height="30"/><rect x="1099" y="395" width="32" height="30"/><rect x="1099" y="431" width="32" height="30"/></g>
<circle cx="1114" cy="87" r="7.500" fill="none" stroke="#c2c2c2" stroke-width="1.500"/><path d="M1113 86l2 7 1.500-2.500 3 3 1.500-1.500-3-3 2.500-1.500z" fill="#c2c2c2"/>
<g>
<use href="#fd" x="1115" y="123"/><use href="#fd" x="1115" y="159"/><use href="#fd" x="1115" y="195"/><use href="#fd" x="1115" y="231"/><use href="#fd" x="1115" y="267"/><use href="#fd" x="1115" y="303"/><use href="#fd" x="1115" y="339"/><use href="#fd" x="1115" y="375"/><use href="#fd" x="1115" y="411"/><use href="#fd" x="1115" y="447"/>
<g fill="#c2c2c2"><rect x="1110" y="120" width="2" height="2"/><rect x="1114" y="120" width="2" height="2"/><rect x="1118" y="120" width="2" height="2"/><rect x="1110" y="124" width="2" height="2"/><rect x="1114" y="124" width="2" height="2"/><rect x="1118" y="124" width="2" height="2"/><rect x="1110" y="128" width="2" height="2"/><rect x="1114" y="128" width="2" height="2"/><rect x="1118" y="128" width="2" height="2"/>
<rect x="1110" y="300" width="2" height="2"/><rect x="1114" y="300" width="2" height="2"/><rect x="1118" y="300" width="2" height="2"/><rect x="1110" y="304" width="2" height="2"/><rect x="1114" y="304" width="2" height="2"/><rect x="1118" y="304" width="2" height="2"/><rect x="1110" y="308" width="2" height="2"/><rect x="1114" y="308" width="2" height="2"/><rect x="1118" y="308" width="2" height="2"/>
<rect x="1111" y="157" width="8" height="8" fill="#8a8a8a"/>
<rect x="1110" y="228" width="10" height="9" fill="#999"/></g>
<g fill="none" stroke="#c2c2c2"><rect x="1110" y="192" width="10" height="9"/><path d="M1110 196h10M1115 196v5"/><rect x="1110" y="264" width="10" height="9"/><path d="M1110 268h10M1115 268v5"/></g>
<path d="M1110 335l10 9M1120 335l-10 9" stroke="#c8c8c8" stroke-width="3"/>
<path d="M1111 378l9-8M1110 372v7h8" fill="none" stroke="#c2c2c2"/>
<path d="M1111 415v-6a2 2 0 1 1 3 0v6zM1117 407h3v8h-3z" fill="none" stroke="#c2c2c2"/>
<circle cx="1115" cy="443" r="1.500" fill="#c2c2c2"/><path d="M1110 446h10M1115 445v4l-2 4M1115 449l2 4" stroke="#c2c2c2" stroke-width="1.500" fill="none"/>
</g>

<!-- right panels -->
<g clip-path="url(#rp)">
<rect x="1136" y="68" width="57" height="24" fill="#2e2e2e"/>
<rect x="1155" y="72" width="38" height="20" fill="#3a3a3a"/>
<path d="M1142 76h8M1142 79h8M1142 82h8" stroke="#777"/>
<rect x="1163" y="78" width="11" height="9" fill="none" stroke="#bbb"/><rect x="1165" y="76" width="11" height="9" fill="#444" stroke="#bbb"/>
<text x="1183" y="85" font-size="11" fill="#aaa">Na</text>
<rect x="1136" y="92" width="32" height="130" fill="#2a2a2a"/>
<rect x="1167" y="92" width="26" height="130" fill="#12151a"/>
<g clip-path="url(#nv)">
<rect x="1167" y="175" width="26" height="47" fill="#232936"/>
<path d="M1168 118L1180 105L1193 103L1193 112L1180 116Z" fill="#e2563a"/>
<path d="M1170 145C1172 128 1180 118 1193 114" fill="none" stroke="#f59f94" stroke-width="6"/>
<path d="M1168 148C1178 155 1186 158 1193 158" fill="none" stroke="#f59f94" stroke-width="6"/>
<path d="M1168 175C1178 174 1188 168 1193 164" fill="none" stroke="#f59f94" stroke-width="2.500"/>
<circle cx="1188" cy="133" r="5" fill="none" stroke="#d5b8e5" stroke-width="2"/>
<path d="M1170 195l2 4-2 4 3 4-2 4" fill="none" stroke="#394152" stroke-width="3"/>
</g>
<rect x="1190.500" y="105.500" width="10" height="38" fill="none" stroke="#f01818"/>
<rect x="1136" y="224" width="57" height="41" fill="#3a3a3a"/>
<rect x="1141" y="234" width="52" height="11" fill="#2a2a2a"/><rect x="1141" y="252" width="52" height="11" fill="#2a2a2a"/>
<rect x="1164" y="226" width="3" height="19" fill="#777"/><rect x="1166" y="246" width="3" height="19" fill="#777"/>
<text x="1142" y="242" font-size="11.500" fill="#ddd" textLength="21" lengthAdjust="spacingAndGlyphs">38.8</text>
<text x="1145" y="262" font-size="11.500" fill="#ddd" textLength="15" lengthAdjust="spacingAndGlyphs">0.0</text>
<rect x="1136" y="265" width="57" height="1" fill="#222"/>
<rect x="1136" y="266" width="57" height="25" fill="#2e2e2e"/>
<rect x="1155" y="271" width="38" height="20" fill="#3a3a3a"/>
<path d="M1142 276h8M1142 279h8M1142 282h8" stroke="#777"/>
<path d="M1163 280l6-3 6 3-6 3zM1163 284l6 3 6-3M1163 288l6 3" fill="none" stroke="#bbb"/>
<text x="1183" y="285" font-size="11" fill="#aaa">La</text>
<rect x="1136" y="291" width="57" height="112" fill="#333"/>
<text x="1146" y="304" font-size="12" fill="#ccc" textLength="27" lengthAdjust="spacingAndGlyphs">Effect</text>
<path d="M1141 300h4M1175 300h18" stroke="#666"/>
<rect x="1184" y="307" width="20" height="20" rx="1" fill="#3d3d3d" stroke="#555"/><circle cx="1195" cy="317" r="6" fill="none" stroke="#bbb"/>
<text x="1146" y="341" font-size="12" fill="#ccc">Expression</text>
<path d="M1141 337h4" stroke="#666"/>
<rect x="1153" y="347" width="60" height="20" rx="1" fill="#444"/>
<circle cx="1174" cy="355" r="3.500" fill="#e15a5a"/><circle cx="1170" cy="361" r="3.500" fill="#5cc05a"/><circle cx="1178" cy="361" r="3.500" fill="#4f82df"/>
<text x="1186" y="362" font-size="12" fill="#ccc">C</text>
<rect x="1136" y="370" width="57" height="33" fill="#2f2f2f"/>
<rect x="1136" y="403" width="57" height="20" fill="#2e2e2e"/>
<rect x="1155" y="406" width="38" height="17" fill="#3a3a3a"/>
<rect x="1141" y="406" width="12" height="12" fill="#333"/>
<path d="M1142 408h8M1142 412h8M1142 416h8" stroke="#777"/>
<path d="M1163 415l6-3 6 3-6 3zM1163 411l6-3 6 3-6 3zM1163 419l6 3 6-3" fill="none" stroke="#bbb"/>
<text x="1183" y="419" font-size="11" fill="#aaa">La</text>
<rect x="1136" y="423" width="57" height="70" fill="#3a3a3a"/>
<rect x="1137" y="425" width="32" height="19" fill="#484848"/><rect x="1141" y="429" width="15" height="13" rx="2" fill="none" stroke="#c5c5c5"/><path d="M1164 433l3.500 3.500 3.500-3.500" fill="none" stroke="#aaa"/>
<rect x="1179" y="425" width="14" height="19" fill="#484848"/><text x="1181" y="439" font-size="11" fill="#bbb">No</text>
<g fill="none" stroke="#bbb"><rect x="1142" y="451" width="10" height="10" stroke-dasharray="2 1"/><path d="M1167 449v12M1163 461h8M1160 453h14M1165 453l-3-2M1172 453l3-2M1182 450v8a3 3 0 0 0 6 0M1188 450h5"/>
<path d="M1145 473h7l3 3v5M1145 473v12h5"/><path d="M1165 473h7l3 3v5M1165 473v12h5"/><rect x="1168" y="477" width="4" height="4"/><path d="M1184 473h5l1 2h5v11h-11z" fill="#bbb"/></g>
<circle cx="1157" cy="485" r="3.500" fill="#ccc"/><circle cx="1177" cy="485" r="3.500" fill="#ccc"/>
<!-- layers -->
<rect x="1136" y="493" width="57" height="40" fill="#2c2c2c"/><rect x="1136" y="534" width="57" height="40" fill="#2c2c2c"/><rect x="1136" y="575" width="57" height="40" fill="#2c2c2c"/><rect x="1136" y="616" width="57" height="40" fill="#2c2c2c"/><rect x="1136" y="657" width="57" height="40" fill="#2c2c2c"/><rect x="1136" y="698" width="57" height="38" fill="#2c2c2c"/>
<rect x="1174" y="493" width="19" height="40" fill="#4b556b"/>
<rect x="1137" y="534" width="37" height="40" fill="#000"/>
<rect x="1137" y="575" width="37" height="40" fill="#fff"/>
<rect x="1137" y="616" width="37" height="40" fill="#ffa9a0"/>
<path d="M1156.500 493V736" stroke="#222"/>
<rect x="1175" y="534" width="18" height="40" fill="#2c2c2c"/><rect x="1175" y="575" width="18" height="40" fill="#2c2c2c"/><rect x="1175" y="616" width="18" height="40" fill="#2c2c2c"/>
<use href="#eye" x="1146" y="513"/><use href="#eye" x="1146" y="553"/><use href="#eye" x="1146" y="594"/><use href="#eye" x="1146" y="635"/><use href="#eye" x="1146" y="676"/><use href="#eye" x="1146" y="717"/>
<path d="M1158 520h14M1160 518l8-9 2 2-7 7z" fill="#bbb" stroke="#bbb" stroke-width=".6"/>
<rect x="1161" y="548" width="10" height="10" rx="2" fill="#181818"/><rect x="1161.500" y="589" width="10" height="10" rx="2" fill="none" stroke="#ccc"/><rect x="1161.500" y="630" width="10" height="10" rx="2" fill="none" stroke="#e58f86"/>
<rect x="1161" y="671" width="10" height="10" rx="2" fill="#333"/><rect x="1161" y="712" width="10" height="10" rx="2" fill="#333"/>
<rect x="1181.500" y="496.500" width="14" height="33" fill="url(#ck)" stroke="#dde"/>
<rect x="1182" y="538" width="13" height="32" fill="url(#ck)"/><rect x="1182" y="579" width="13" height="32" fill="url(#ck)"/><rect x="1182" y="620" width="13" height="32" fill="url(#ck)"/><path d="M1185 635l8-8v8l-5 3z" fill="#f6a8a0"/>
<rect x="1182" y="661" width="13" height="32" fill="url(#ck)"/><path d="M1183 693v-8l3-3 4 1 3 3v7z" fill="#333"/>
<rect x="1182" y="702" width="13" height="32" fill="url(#ck)"/><path d="M1183 734v-8l3-2 3 5 3-4v9z" fill="#555"/>
</g>
</svg>
<div id="ring"></div>
<div id="tri"></div>
<svg width="1193" height="736" viewBox="0 0 1193 736" xmlns="http://www.w3.org/2000/svg" style="pointer-events:none"><rect x="64" y="587.500" width="8" height="12" fill="#111" stroke="#fff"/><rect x="66" y="590" width="4" height="7" fill="#ecec10"/><circle cx="88.500" cy="644.500" r="4.500" fill="#d8d85a" stroke="#ddd"/></svg>
</body></html>
